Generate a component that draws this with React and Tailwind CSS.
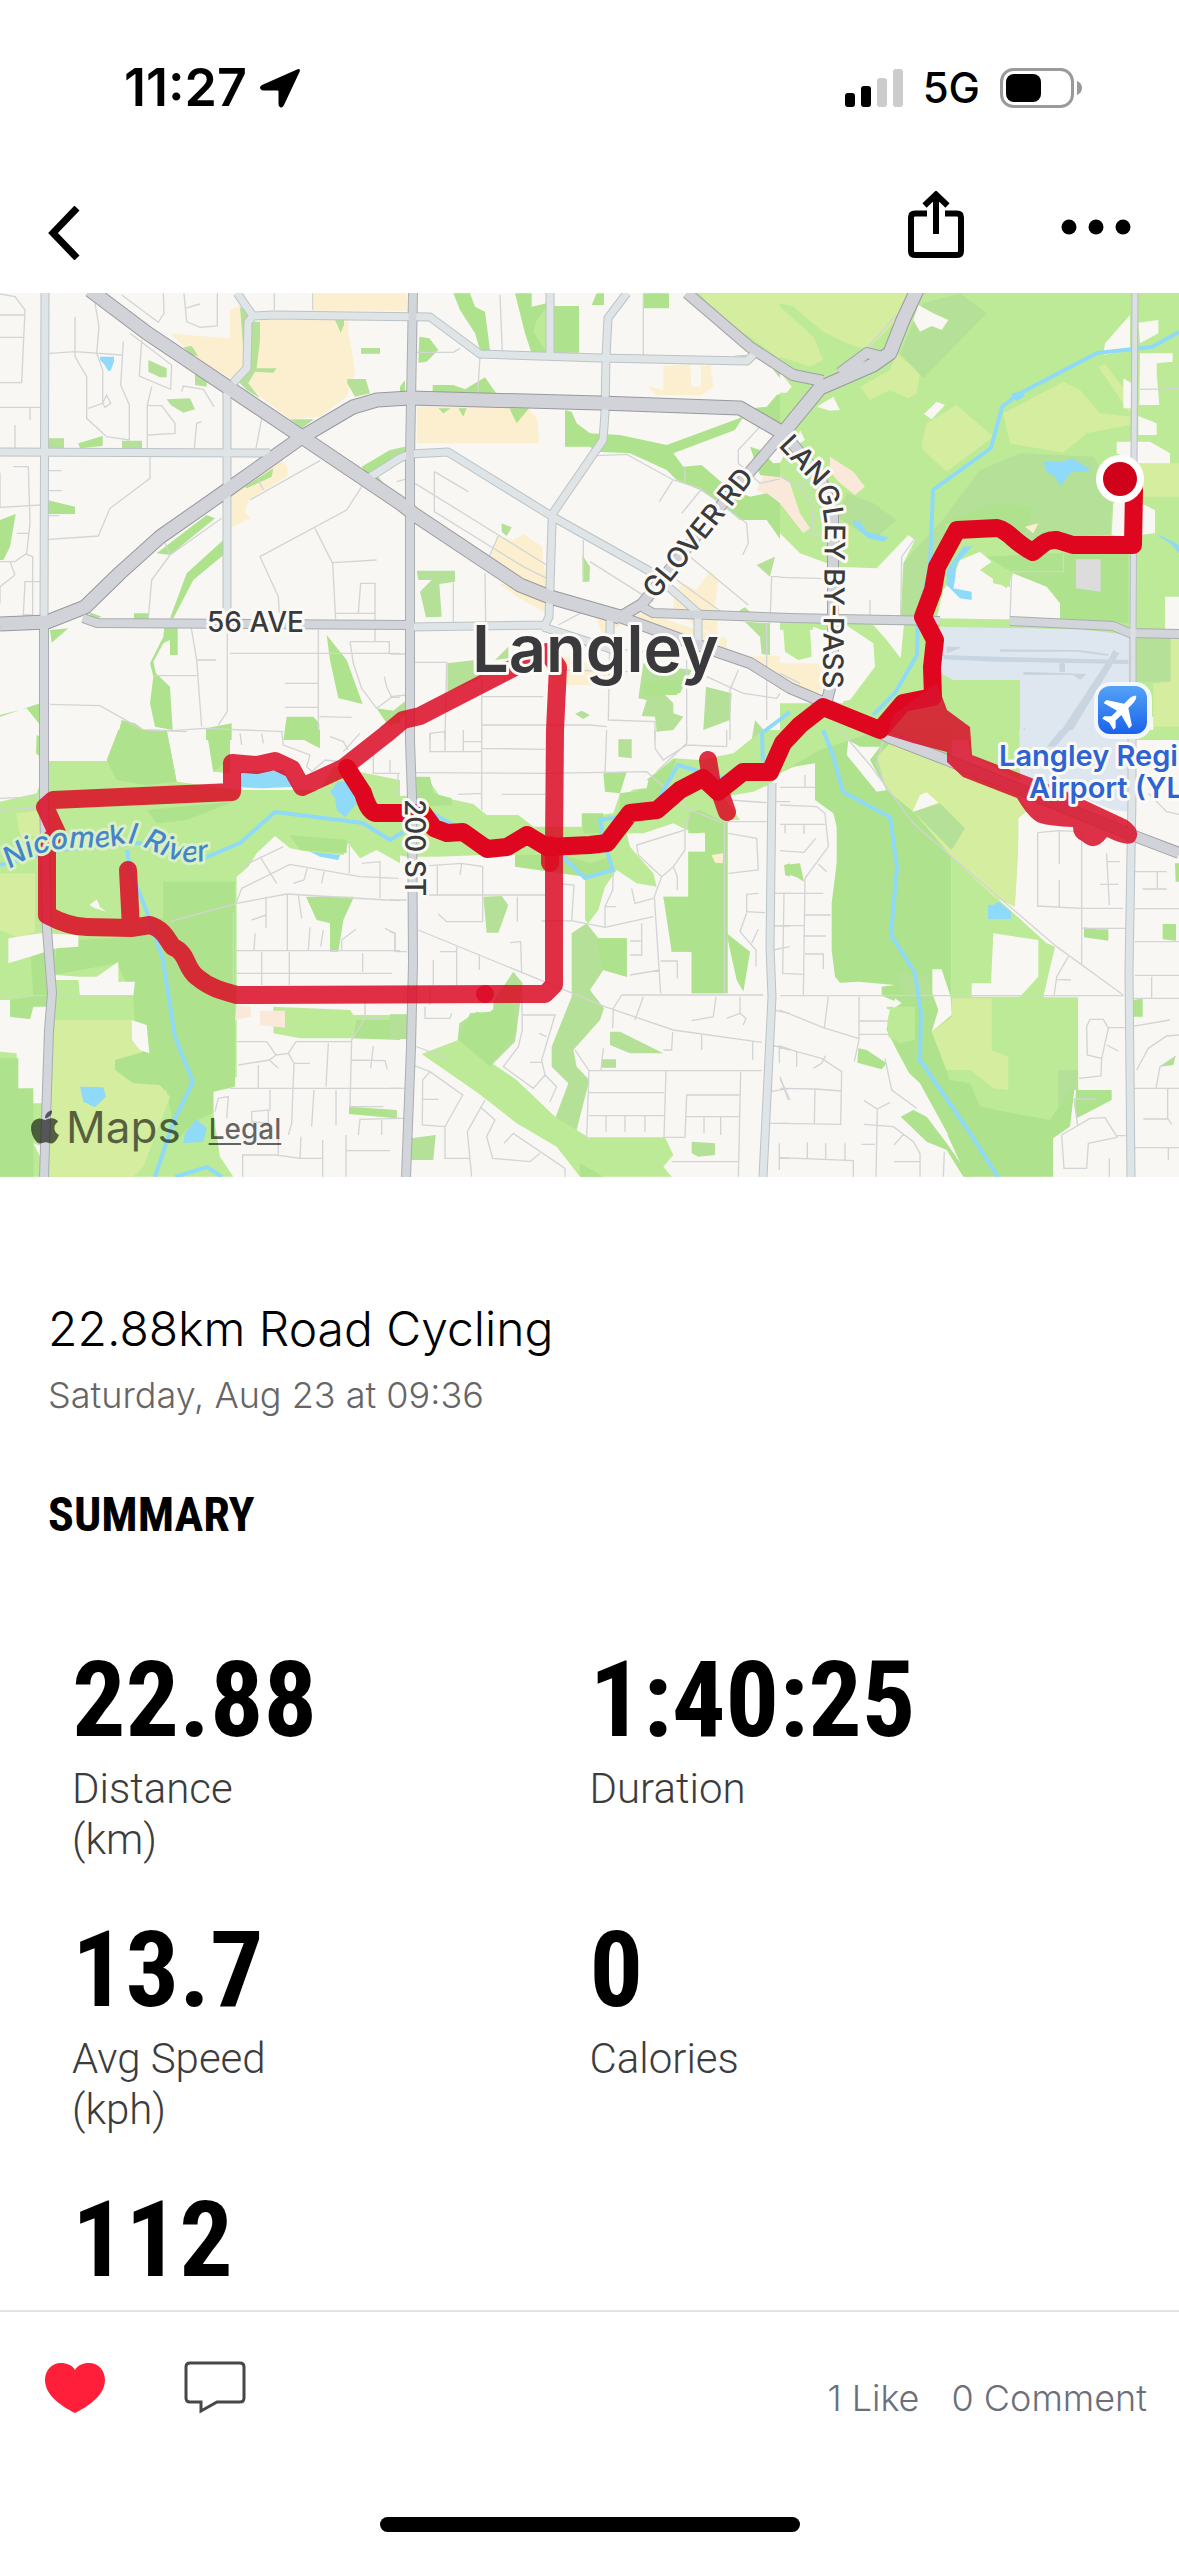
import React from "react";
import { FaApple } from "react-icons/fa";

const LAND = "#f8f7f3";
const GRASS = "#bcea96";
const WOOD = "#aee28c";
const PARK = "#b5e097";
const FIELD = "#d5ed9f";
const SHOPS = "#fcefcf";
const WATER = "#8fdaf8";
const BUILT = "#dcdcdc";
const CAMPUS = "#fae9da";

// every tile is drawn at 3 units per map unit
const tiles = [
  {
    x: 0,
    y: 290,
    areas: [
      [SHOPS, "M940 0H1200V62H940Z M780 90H1045V130L1055 180L1065 250L1040 320L960 380L870 388L780 320L745 280L762 240Z M510 130L560 135L690 145V60L720 45L735 90V240L690 265L600 210L540 160Z M695 600L780 550L840 505L862 530V558L795 600L745 630L735 668L752 685L695 712Z"],
      [WATER, "M300 200H342V215L332 242H324L315 226L300 210Z"],
      [PARK, "M720 50L735 60L762 95H780V150L770 235H830L820 248L765 245L745 280L780 325L740 300L700 260L735 240Z M550 172L575 168L595 198L575 195Z M445 210L500 235V262L480 262L445 245Z M585 250L620 265V290L585 285Z M500 328L570 325L585 358L550 368L512 345Z M1083 174H1140V191H1083Z M1005 90H1032V105L1022 130L1012 105Z M1042 267H1097L1110 310L1065 320L1042 280Z M870 388H942L905 415Z M142 445H192V475H142Z M366 452H426V478H366Z"],
      [WOOD, "M235 460L308 438V468L240 475Z M142 630L225 650V672H142Z M0 690L47 672L30 770L10 810H0Z M470 790L620 675L645 685L510 795Z M670 750V795L580 870L520 985H510L560 850Z M265 965L305 980L280 990Z M402 970H445V990H402Z M735 590L820 535L815 560L740 595Z M1085 530L1170 480H1200V505L1120 540L1150 580L1100 555Z M150 1020L205 1015L155 1058Z"],
      [WOOD, "M493 1010H533V1095H510V1050L490 1060L460 1115L468 1150L510 1190L518 1320L465 1310L450 1240L460 1160L450 1120L490 1040Z M980 1035L1040 1110L1088 1242L1015 1225L990 1110Z M0 1280L120 1240V1305L80 1255L0 1275Z M350 1350L365 1290L405 1300L440 1325L490 1350Z M618 1350V1315L695 1300V1350Z M850 1350L860 1280H940L958 1300V1350Z M1130 1255L1200 1265V1300L1160 1300Z"],
    ],
    streets:
      "M0 12L45 20L75 60L65 278H0 M0 142H72 M0 75H75 M0 352H122 M90 355V390 M45 405V475 M285 40L297 110L290 190L308 240V340L265 355 M308 340L320 315L332 340L315 352Z M148 190L225 185L365 195 M225 80V200L260 260V385L320 440L388 450V345L362 285L370 155 M365 15L475 97L492 70L490 10 M552 10L560 95L600 112L652 108V10 M555 55L600 42 M823 10V60 M938 10V60 M390 130L515 225L512 298L418 258L425 150 M455 290L442 345V475 M545 305L550 288L610 298L642 350 M442 347H485L525 400V430L445 435 M583 475L590 400L605 395 M785 385L768 475 M450 500V565L330 655L295 738L145 748 M145 542H185 M145 602H185 M145 677H178 M40 530H85L90 700L80 790L45 815L0 815 M50 730H85 M0 652L122 645 M80 793L98 800V975H70L75 875H122 M45 855L30 815 M45 855L0 890V940 M0 548V650 M510 795L455 870L445 985 M665 685L510 795L495 760 M960 512L750 630 M790 600L770 560 M1085 590L1040 660L780 800L835 920L838 970 M945 715L998 820L1007 990 M998 818L1130 810 M1075 970L1082 880H1125V1055 M1005 970H1125 M574 1015L590 1110L605 1310 M590 1110H648 M465 1157H590 M682 1020V1265L655 1305 M690 1090H1200 M955 1020V1350 M855 1180H955 M855 1252H955 M958 1280L1055 1282 M1050 1055L1060 1120L1085 1195L1130 1255 M1050 1055H1168V1090 M1153 1160L1160 1190L1175 1222L1130 1255 M1175 1222H1200 M150 1243L300 1247L430 1320L520 1322L610 1315L850 1325",
  },
  {
    x: 390,
    y: 290,
    areas: [
      [SHOPS, "M0 10H50V62H0Z M80 350H410L440 385L448 460H80Z M770 288L820 300V228L900 222L905 290H932V228L962 225L970 290L935 315H800Z M320 738L372 750L400 732L458 770V810L470 865V900L400 875L300 805Z M325 880L400 890L470 930V970L380 920Z M620 990L680 980L780 965L860 1000L1010 1045V1100L840 1040L700 1000L640 1040Z M850 910L880 880L920 900L960 840L985 870L975 950L985 1040L920 1010L850 960Z M1080 1100L1200 1095V1185L1140 1150Z M460 1120L530 1100L660 1140V1185H500Z"],
      [CAMPUS, "M1125 545L1200 560V650L1100 600Z"],
      [WOOD, "M190 10H240L255 50L285 65L300 180H270L255 130L210 60Z M375 10H425V50L470 40V190H425L405 130Z M490 48H567V188H490Z M605 45L620 10H642V45Z M762 10H837V55H762Z M88 140L118 145L145 180L110 215L85 218Z M128 285H190L225 298L285 262L320 312L128 306Z M30 290L45 270V310H30Z M145 355H182L160 370Z M205 355H230L220 380Z M358 355H417L380 400Z M525 360L545 365L560 400L600 430L690 435L830 465L1060 380L1035 420L850 490L880 530L935 525L1010 590L1080 620L1130 610L1200 660V790L1130 690L1050 690L990 640L930 600L860 570L830 540L720 490L620 485L600 470H525Z M1080 355L1130 350L1160 315L1200 305V400L1170 410Z"],
      [PARK, "M0 480L45 470V490L0 520Z M335 700L365 712L350 738L335 725Z M577 795L600 830L598 875H578Z M80 842H195V875L148 882L155 980L108 982L90 905L125 870L85 870Z M1100 825L1155 800L1140 860Z M1065 995L1140 1000V1095L1115 1092L1110 1040Z M1050 960L1065 952L1085 970L1050 970Z M760 1120L905 1140L870 1210L825 1215L850 1240V1270L880 1280L850 1320L800 1322L795 1280L755 1278L770 1230L745 1225Z M172 1120L255 1110L310 1130L260 1170L172 1205Z M315 1110L355 1070V1105Z M948 1190L1025 1210L1020 1290L940 1320Z M555 1272L575 1262L600 1275L580 1287Z M0 1270L50 1230V1270L0 1310Z M1095 1290L1130 1330L1110 1350H1085Z M1030 195H1080L1060 200Z M1150 240L1200 300V250Z"],
      [GRASS, "M440 90L470 50V188L430 125Z M900 10H1200V250L1080 160L1030 150L960 80Z"],
      [FIELD, "M930 10H1200V230L1080 140L990 90Z"],
      [WOOD, "M1080 470L1110 480L1150 520L1200 515V565L1110 555Z M760 1175L885 1170L860 1215H765Z"],
    ],
    streets:
      "M330 15L337 185 M760 10V195 M80 187H190L210 175 M270 200L263 315 M133 545L235 605 M133 545V665L400 830L470 865 M75 580L470 825 M295 805L325 738 M285 850L287 995 M190 878V1000 M20 575L75 560 M620 497L710 493L850 570L930 595L1070 700L1075 760L1058 795 M848 572L808 635 M935 597L875 670 M885 530V575 M1110 410L1045 480V520L1110 580L1200 560 M580 750V875 M600 815L790 935 M860 870L1000 970 M900 800L1075 945 M1200 860H1145L1140 1000 M1130 1000V1290 M505 1005L580 965 M660 1020L655 1290L795 1295V1350 M520 1060L760 1085 M510 1140L720 1145 M275 1160V1350 M275 1305H600L650 1310 M75 1117H170L165 1350 M275 1220H460 M890 1110V1350 M950 1160L1060 1210L1160 1225L1180 1195 M1045 1140L1020 1200V1350 M0 1220L50 1215 M0 1092H45 M120 1350V1330L165 1325",
  },
  {
    x: 780,
    y: 290,
    areas: [
      [GRASS, "M0 0H1197V1350H0Z"],
      [FIELD, "M0 10H385L350 90L260 180L200 160L130 125L40 50L0 40Z M0 50L100 140L130 210L90 230L0 200Z M240 290L330 240L350 190L420 250L410 310L385 325L330 300L270 330Z M425 460L440 400L530 345L640 440L500 545L430 480Z M670 370L850 275L900 300L960 370L1050 380V405L920 430L850 488L690 460Z M955 230L975 222L1050 320V370Z M1060 520H1197V620H1080Z M1140 1045H1197V1310H1120V1180H1140Z"],
      [PARK, "M430 40L540 10L620 70L430 265L360 190L400 100Z M600 540L720 490L940 500L1000 600L990 735L800 740L740 760L640 700L500 700L470 900L400 1000L360 970L370 820L440 740L480 700Z M200 610L280 640L350 690L280 750L170 680Z M1065 1045H1172V1175H1065Z"],
      [WOOD, "M620 800L800 790H1045V1000L840 985L820 910L700 850Z M480 700L640 640L760 650L730 740L640 700Z"],
      [LAND, "M415 45L460 70L505 90L485 120L455 108L420 125L400 90Z M0 245L35 290L20 308H0Z M110 350L160 320L180 360L150 362Z M470 335L495 345L455 388L432 372Z M970 195L975 160L1050 75V180Z M1075 98L1135 90V130L1080 160Z M1080 190H1178V215L1130 220V250L1138 345H1078Z M1030 265L1055 280V355H1030Z M1075 378L1130 400V435H1075Z M1010 455H1110L1170 490V520H1075L1010 490Z M1000 640L1040 620L1125 660V730L1080 735L1040 745L995 735Z M1155 920H1197V1025H1155Z M0 730L60 790L170 830L290 835L385 735L405 750L370 820L362 980L0 980Z M470 985L490 900L520 860L540 810L600 785L635 815L600 840L680 895L700 850L800 890L840 940V990Z M190 1000L280 1060L285 1130L210 1230L180 1235Z M280 1005H372L362 1105L320 1050Z M100 1010L180 1040V1130L100 1160L95 1030Z M60 420L75 450L50 465Z M1110 1280H1120V1320H1110Z M0 460L20 480L0 520Z M0 1020H190V1240H0Z"],
      [GRASS, "M10 1020L90 1020L95 1100L55 1110L15 1085Z M635 825L690 840V890L640 880Z"],
      [SHOPS, "M0 1120H125V1210L60 1200L0 1165Z M735 710L775 700L760 730Z"],
      [CAMPUS, "M0 555L30 580L60 670L90 715L70 730L0 640Z M150 500L220 545L255 590L225 615L180 580L150 545Z"],
      [BUILT, "M888 808H962V905L888 895Z"],
      ["#dee7f0", "M480 1010L900 1018L1047 1035V1350H720V1170H520L480 1150Z"],
      ["#c8d4df", "M490 1095L650 1100L1045 1110V1122L650 1115L490 1108Z M660 1078L900 1080L985 1092V1098L890 1085H660Z M1000 1080L1018 1090L860 1350H825L990 1100Z M500 1070H540V1075L500 1090Z M730 1145L920 1152L900 1170L880 1155H730Z M730 1310L745 1330V1350H735Z M838 1120H855V1145H838Z"],
      [WATER, "M790 515L850 515L875 505L935 540L905 545L875 545L840 588L825 560L800 545Z M218 690L240 695L260 725L325 742L310 755L265 745L225 710Z M1130 735L1150 740L1197 765V790L1170 760Z M550 770L578 768L530 820L525 870L520 895L575 905V930L540 925L500 885V840Z M695 310L725 305L735 318L712 332L695 325Z"],
    ],
    streets:
      "M0 560L60 590L130 530 M60 590L95 640L100 735H135 M0 862L140 866 M270 930V980 M405 745L365 800L362 980 M255 180L350 75 M60 310L100 350 M1080 298L1197 296 M690 990L695 845H850V790 M0 1150L60 1180 M170 1310L210 1350",
  },
  {
    x: 0,
    y: 730,
    areas: [
      [GRASS, "M0 215L110 190L145 93H325L355 0H500L530 155L720 180H960L1000 110L1200 150V400L1130 360L1080 385L1045 340L1030 375L950 370L870 355L825 318L770 370L745 410L710 440V640V1040L640 1085V1150L660 1280L700 1340H0Z M620 0H690V130L640 125Z"],
      [WOOD, "M320 90L355 0H500L530 155L440 165L350 150Z M490 455H705V1070L640 1085V1150L590 1170L530 1230L500 1080L380 1055L345 1020V985L410 970L400 800L350 700L160 735L170 655L240 630L400 620L490 560Z M0 1075H100V1340H0Z M440 240L700 215L560 270L470 280Z M870 315L1040 330V370L900 360Z M92 680L165 650V870H30V810L100 800Z M620 0H690V90L640 125Z M860 0H960V55L930 40Z M110 15L120 20V80L108 70Z"],
      [FIELD, "M0 430H105V605L60 625L0 600Z M48 250L130 240V320L60 315Z M165 870H395L392 930L430 965L345 990V1020L400 1060L480 1065L510 1100L430 1310L400 1340H140L150 1000Z M108 978H140V1012H108Z"],
      [LAND, "M25 625L120 610L235 615V650L170 655L90 680L25 700Z M165 735L240 740L290 740L355 695V755H405L400 797H240L235 750L165 750Z M0 810H30V860L90 868L100 830H160L150 1120H100V1075H50V970L0 965Z M395 870L440 885L448 970L420 960L395 930Z M268 525L290 508L300 530L318 545L285 535Z M100 1240L130 1250V1300Z"],
      [GRASS, "M820 830L1050 840L1060 855H1200V925H900L820 910Z"],
      [WOOD, "M918 500H1062L1030 570L1015 665H990V580L950 570Z M1047 1130L1190 1140V1165L1047 1152Z M1070 870H1200V930L1060 925Z M0 985L55 985V1080H0Z"],
      [CAMPUS, "M710 825L752 830V860L705 870Z M780 842H855V893L780 885Z"],
      [WATER, "M720 125L850 120L880 170L790 175L720 172Z M990 185L1015 155H1050L1070 220L1035 262L1010 240L1005 205Z M930 365L1020 375L1015 390L960 380Z M240 1070L310 1072L318 1100L285 1132L250 1115Z M555 1210L590 1168L620 1195L610 1235L550 1240Z"],
    ],
    streets:
      "M0 240L110 235 M0 205L120 200 M440 0L560 5 M720 10L725 45 M785 10L790 40 M845 5L850 45L930 75L920 110L935 125L975 90L1020 95 M990 20L1030 35L1045 60 M1080 10L1030 65 M1120 70V130H1200 M1170 90V130 M510 575L710 520L860 492L1160 510L1200 512 M710 515L725 475L870 403L1080 440L1195 445 M780 380L830 460 M850 350L725 410 M922 415L912 450L880 460 M972 425L965 460 M1048 345V430 M1085 400L1140 395V505 M862 492V662 M798 500V595 M755 570L798 555 M895 495L905 565 M762 660L765 610 M930 592L925 660 M970 600L962 650 M700 548V760 M705 662H1200 M785 665V765 M868 665V765 M705 730H1175 M1088 670V725 M1155 595L1185 610V660 M1068 598L1025 630V660 M0 797H400 M1095 815V865L1055 930L1050 1130H1150 M1095 862L1150 868 M710 935H800L828 975L865 970L888 935H1055 M715 1005L808 990L828 975 M808 990L835 1015 M865 970L882 1000H930 M882 1000L875 1180L865 1215 M775 1005V1075 M985 940L978 1070 M690 1075H1200 M810 1080V1140L755 1145V1175L805 1180V1140 M942 1080L935 1190 M1008 1080V1185 M1055 990L1155 992L1162 1018 M1120 948L1112 1015 M1200 1165L1080 1168L1075 1215 M1145 1170V1215 M1038 1215V1340 M1040 1262H1170 M968 1230V1340 M728 1340V1275L830 1275L900 1285H965 M903 1220L900 1285 M835 1220V1275 M645 1145L655 1105L685 1100L680 1165",
  },
  {
    x: 390,
    y: 730,
    areas: [
      [GRASS, "M0 200L75 195V140L120 155L150 200L250 222L290 255H385L430 290H575V262L670 250L690 190L720 185L770 150L850 85L930 90L1030 70L1080 30L1120 0H1200V80L1145 160L1090 185L1000 200L1030 240L1050 270V790H905V665H845L835 560L820 500H895V365H945V310L890 300L850 280L760 310H710L720 350L790 430L800 470L740 460L680 420L645 470L625 540L595 580L585 570V445L530 420L375 410V375L280 375L140 380L50 380L0 370Z"],
      [LAND, "M1014 270H1060V800H1014Z"],
      [WOOD, "M80 140L120 140L130 190L185 205V225L80 230Z M640 130L710 125L690 190L645 185Z M820 500H895V365H945V280L1010 270V790H905V665H845Z M375 375H520L600 400L660 380L668 425L585 440L375 410Z M575 250H640V310H580Z M1010 610L1080 665L1060 785L1040 750L1020 660Z M895 250L930 240L1000 275L930 310H895Z M770 150L860 85L840 140L810 200L690 250V190L740 185Z"],
      [PARK, "M280 500L335 498L355 525L325 608H290Z M370 725L398 760L380 900L375 935L300 1010L200 960L208 880L260 845L310 860V815Z M545 610L590 580L625 625H710V740L640 720L600 780L642 835L630 870L550 960L560 1010L598 1050L560 1200L490 1180L535 1060L485 1010V950L545 800Z M660 905H690L820 970H720L660 945Z M635 988H678V1013H635Z M905 1235L975 1240V1275L925 1280L905 1270Z M62 1225L137 1215L130 1290H62Z M0 853H52V927H0Z M685 28H725V85L685 80Z M1185 405L1200 400V440L1185 435Z M0 1140H20V1165H0Z M795 0H845L800 5Z"],
      [GRASS, "M95 972L205 930L380 1050L495 1160L595 1222H825L850 1275L820 1310L845 1340H570L500 1250L380 1180L265 1090Z"],
      [WOOD, "M208 930L240 850L300 845L360 800L380 900L300 1010Z M620 625H710V740L640 720Z M570 1300L640 1340H570Z"],
      [LAND, "M710 150L775 150L770 175L715 180Z"],
      [SHOPS, "M965 375L1000 370L998 400L975 398Z"],
    ],
    streets:
      "M120 10V65H275 M165 0V65 M220 0V65 M220 35H275 M275 0V240 M275 55L465 58 M75 128L465 130L770 125L900 240L990 275H1130 M650 0L645 130 M205 193L275 190 M335 193H465 M795 0V55L820 90L890 45L1010 50 M890 0V40L800 125 M1010 0V50 M75 410L215 400L278 410V575H170L145 552 M142 408V495 M215 400L210 435 M110 495H465 M382 500V575 M85 600L645 830L850 900L1115 937 M200 645V765 M150 665H200 M130 690V765 M268 672V720 M360 638L392 635L395 730 M515 462L552 465L545 572L645 592L790 560 M455 573L545 572 M645 592V530L668 480L670 420 M645 530H678 M755 580V675H720 M720 633H752 M725 475L735 520L790 505 M900 250L885 300L740 345L745 375L815 440L793 500L812 790 M885 300L885 360L850 410L862 440V480 M850 410L815 440 M812 693H862V745 M720 735L810 720 M1003 280V790 M1015 310L1100 325L1105 420L1015 430 M1105 490L1070 493V545L1125 548 M1070 548L1050 605L1098 660V710 M1105 598L1085 640 M1020 210L1130 218 M695 795H1120 M695 795L670 835L668 895 M760 800L735 870 M978 800L970 860L905 872 M1050 800V850L1010 865 M1050 850L1068 865L1060 885 M848 905L845 960H820 M935 910V960 M1088 935V990 M105 830V865H180L185 850 M120 770V825 M395 770L397 900L385 950L340 1010L430 1075L465 1035L500 1070L480 1115 M397 855H495L455 990L465 1035 M420 997H455 M448 910L470 920 M75 948L170 985 M75 1008L120 1025L218 1095L165 1190L97 1185L98 1050L120 1025 M98 1108H145 M165 1190V1285H240 M285 1110L232 1205L245 1340 M270 1130L315 1170L290 1220L308 1285L420 1295L450 1270 M342 1240L370 1210L525 1315V1340 M555 960L597 1022H1115 M597 1022L590 1225 M597 1088H822 M597 1157H822 M828 1022L822 1222H885L890 1095H1048 M888 1160H1050 M648 1157V1205 M705 1157V1205 M765 1157V1205 M942 1160V1210 M992 1160V1215 M1052 1025L1045 1340 M845 1295H1045 M640 955L633 1020 M0 510H50 M0 605L15 610V665H50 M0 1075H45 M0 1165H45 M1150 490H1200 M1150 588H1200 M1150 660L1200 650 M1150 840L1200 850 M1145 945L1200 960 M1140 1085L1200 1075 M1170 1045L1200 1110 M1168 945V1000 M1140 1180H1200 M1168 1240V1320 M1168 1285H1200 M25 130L20 200 M1150 215H1200",
  },
  {
    x: 780,
    y: 730,
    areas: [
      [WOOD, "M0 130L40 110L105 100V210L160 250L170 290V400L155 520V660L165 740L180 758L235 755L345 765L305 770V797L360 820L330 840L320 900L350 960L420 1090L500 1210L560 1340H820V1225L870 1190L890 1020V800H515V0H0Z"],
      [GRASS, "M515 380L800 640L825 650L790 800H895V1080H870L810 1170L700 1150L600 1130L570 1060L510 1050L490 1000L455 905L515 860V600Z M0 0H300L120 60L0 130Z M560 0H720V150L570 75Z M320 830H405V930L360 940L325 920Z"],
      [FIELD, "M290 80L330 40L500 95L720 205L745 240L715 265V400L705 530L640 500L515 380L400 245L320 180Z M515 805H635V960L685 980V1080L640 1075L570 1020L500 1020L455 905L515 860Z"],
      [PARK, "M400 245L480 220L555 295L515 360Z M345 730L440 740L460 800H380Z M835 1020H895V1080H870L835 1150Z"],
      [LAND, "M205 30L240 50H300L270 90L320 180L290 185L200 75Z M398 245L420 195L440 187L475 218L430 235Z M640 610L775 630V740L720 800H575V760H633Z M457 718H485L512 800L515 855L455 905L475 840L457 790Z M345 805L365 820L340 835Z M330 840L315 900L345 990L420 1060L505 1215L470 1205L340 1080L300 990L230 960L235 800Z"],
      [LAND, "M720 265L760 265L1197 330V1340H820V1225L870 1190L895 1160L1000 1100V1080H895V802H790L828 650L705 540Z"],
      [WOOD, "M888 1080H995V1110L890 1165L885 1130Z M1060 810L1088 805V860H1058Z M1148 582H1188V632L1148 628Z M912 592L950 598H985V632L912 622Z M1185 400H1197V455H1187Z M1140 1010L1187 978L1180 1005Z M235 955L260 960L320 1000L305 1018L232 998Z M362 1160L400 1140L440 1160L500 1240L570 1340H550L500 1260L440 1235Z M12 405L60 400L72 455L50 442L15 430Z"],
      [WATER, "M624 525H640L655 515L693 545V567H624Z"],
      ["#dee7f0", "M718 0H1047V245L1000 240L720 130Z"],
      ["#c8d4df", "M840 0H870L825 50H800Z"],
      [LAND, "M1065 180H1197V335L1065 300Z"],
    ],
    streets:
      "M180 0L270 105L400 280L515 380L830 650L1030 795 M310 30L290 100L320 180 M0 797H1030 M0 172H105 M75 135V172 M0 225L110 230L135 250L145 350L75 445L70 795 M0 283H135 M15 283V310 M72 283V312 M0 362L72 367L107 325 M115 402L140 425 M0 490H130 M12 490L8 730L68 733 M75 555H152 M70 618H137 M0 587H70 M75 672H130V717 M145 800L133 893 M0 840L130 893L235 925 M237 800V930L223 995 M235 873H325 M237 913H325 M0 948L50 965L125 985L185 1025L182 1183L0 1180 M50 965V1010 M137 977L125 1000L100 1015 M0 1075L105 1077L185 1083 M105 1077L103 1180 M0 1040L25 1110 M315 985L335 1080L410 1135 M252 1112L292 1137L330 1117 M292 1137L288 1340 M252 1183L340 1190L400 1235L420 1270V1340 M245 1243H285 M370 1213L342 1245 M342 1295H420 M493 1265L490 1340 M0 1283L220 1292V1340 M82 1237V1285 M137 1240V1287 M195 1240V1290 M773 308L838 302L905 305V705 M773 308V528L905 535H1030 M838 305V402 M838 450V530 M980 370L988 525 M980 395H1020 M960 463H1015 M905 595H1037 M865 680L830 740L822 800 M830 748L873 750 M1065 425H1160 M1132 425V477 M1088 477H1160 M1105 190L1160 245L1197 253 M1065 536H1197 M1065 635H1197 M1065 736H1197 M1115 740V805 M1060 805H1197 M930 868H970L985 895L965 985L922 975L920 890Z M980 945L1015 963 M985 893H1035L1170 870 M965 985L963 1038L897 1045 M1197 915L1160 918L1105 955L1070 1020 M1187 978L1140 1010L1128 1075 M1060 1075H1197 M1163 1077V1165L1175 1183 M1090 1167H1165 M880 1107H948 M882 1110L893 1187 M845 1215L930 1165L975 1163L1012 1222L925 1240L920 1315H852L845 1215 M1012 1217H1037 M1065 1253H1197 M1165 1255V1290 M988 1285V1340",
  },
];

const rivers = [
  "M1179 332L1152 347L1097 353L1017 395L1002 407L991 448L933 490L930 567L918 620L917 655L895 693L873 715",
  "M823 730L833 755L843 792L890 817L897 867L891 935L915 973L921 1013L920 1060L970 1133L998 1177",
  "M790 712L762 733L763 762 M728 780L678 765L660 797 M625 816L600 820L605 845L613 870L585 878L563 857",
  "M430 812L457 827 M403 832L390 840L363 823L275 812L240 843L200 860L140 843L60 850L0 865",
  "M127 850L130 870L147 912L163 960L175 1037L193 1082L173 1123L155 1177 M175 1177L207 1167L222 1177",
];

const roads = [
  {
    casing: "#bcc3c6",
    fill: "#dfe5e6",
    width: 7,
    d: "M45 293L44 620 M227 390V613 M233 383L247 368L248 322L253 316L237 293 M253 316L273 315L430 317L480 354L600 358L747 361L755 353 M0 452L270 453 M550 293V353 M627 293L608 318L606 357L605 413L603 440L553 513L552 523L549 617L545 625L410 627 M370 477L400 458L410 454L448 452L553 517L653 573L698 613V643 M772 783L770 947L772 997L763 1177 M610 615V640 M1132 690V797L1129 970L1131 1177 M543 627L620 652",
  },
  {
    casing: "#a9adb1",
    fill: "#d2d6da",
    width: 8,
    d: "M44 625V797L47 930L52 993L49 1030L44 1177 M83 618L97 623L410 625 M642 607L653 613L790 618L940 621 M1010 621L1113 626L1130 633L1179 634 M413 293L410 457V740L412 797L413 963L411 1047L406 1177",
  },
  { casing: "#babec2", fill: "#dcdfe3", width: 5, d: "M1135 293L1133 633V690" },
  {
    casing: "#9fa0a6",
    fill: "#d2d3d9",
    width: 10,
    d: "M687 293L750 347L793 375L823 381 M840 373L867 353L883 357 M787 437L820 477L833 510V677L827 700 M620 617L642 604L723 503L783 433 M620 617L683 640L750 663L790 688L823 702L890 738L947 760L1137 837L1179 853",
  },
  {
    casing: "#98999f",
    fill: "#d2d3d9",
    width: 13,
    d: "M90 290L147 333L302 437L400 503L415 515L520 585L550 597L620 617 M0 624L47 622L85 607L120 573L160 537L230 488L302 437L353 407L377 400L410 398L600 403L740 408L783 433L820 388L873 365L890 353L903 320L917 290",
  },
];

const loop =
  "M547 652L523 663L420 716L403 720L385 735L343 768L302 787L292 769L275 761L257 765L232 763L232 792L53 800L45 807L57 833L47 843L47 915C60 922 75 927 87 927L131 928L128 870L131 928L150 925C165 930 167 940 173 947C188 953 185 968 197 977C210 988 222 991 237 995L545 994L554 985L554 843L555 730L558 667Z";

const ride =
  "M347 768L352 776L363 793C367 806 370 811 375 813H400L423 813L434 828L447 833L463 832L487 849L507 847L527 835L547 847L590 845L607 843L630 813L657 810L680 790L703 778L718 792L743 772L770 772L783 743L800 725L823 707L880 730L903 703L933 697L932 667L935 640L923 617L933 590L937 567L957 530L997 528C1010 531 1014 543 1033 552C1042 545 1046 539 1057 540L1073 545H1133L1134 490";

const stats = [
  { value: "22.88", label: "Distance", unit: "(km)" },
  { value: "1:40:25", label: "Duration" },
  { value: "13.7", label: "Avg Speed", unit: "(kph)" },
  { value: "0", label: "Calories" },
  { value: "112" },
];

function StatusBar() {
  return (
    <div className="flex justify-between items-center h-44 pl-31 pr-24 font-['Inter',sans-serif] text-black">
      <div className="flex items-center gap-3">
        <span className="text-[52px] leading-none font-semibold">11:27</span>
        <svg className="w-[42px] h-[40px]" viewBox="0 0 42 40">
          <path d="M38 1.500L3 17Q0 19 1.500 21Q2.500 22.500 5 22.500H18.500Q19.500 22.500 19.500 23.500V36Q19.500 39 21.500 39.500Q23.500 40 25 37L40.500 4Q42 0 38 1.500Z" />
        </svg>
      </div>
      <div className="flex items-center gap-5">
        <svg className="w-[58px] h-[38px]" viewBox="0 0 58 38">
          <rect x="0" y="24" width="10" height="14" rx="3" />
          <rect x="16" y="17" width="10" height="21" rx="3" />
          <rect x="32" y="9" width="10" height="29" rx="3" fill="#cccccc" />
          <rect x="48" y="0" width="10" height="38" rx="3" fill="#cccccc" />
        </svg>
        <span className="text-[42px] leading-none font-medium">5G</span>
        <svg className="w-[83px] h-[40px]" viewBox="0 0 83 40">
          <rect x="1.500" y="1.500" width="71" height="37" rx="12" fill="none" stroke="#9a9a9a" strokeWidth="3" />
          <rect x="6" y="6" width="35" height="28" rx="8" />
          <path d="M77 13Q82 15 82 20T77 27Z" fill="#9a9a9a" />
        </svg>
      </div>
    </div>
  );
}

function NavBar() {
  return (
    <div className="flex justify-between items-center h-[117px] pl-12 pr-12 pb-6">
      <button aria-label="Back" className="pt-5">
        <svg className="w-[32px] h-[54px]" viewBox="0 0 32 54" fill="none" stroke="black" strokeWidth="7">
          <path d="M29 2L5 27L29 52" />
        </svg>
      </button>
      <div className="flex items-center gap-24">
        <button aria-label="Share" className="pt-1">
          <svg className="w-[58px] h-[68px]" viewBox="0 0 58 68" fill="none" stroke="black" strokeWidth="6">
            <path d="M20 22.500H8Q4 22.500 4 26.500V60Q4 64 8 64H50Q54 64 54 60V26.500Q54 22.500 50 22.500H38" />
            <path d="M29 43V4M17.500 14.500L29 3.500L40.500 14.500" />
          </svg>
        </button>
        <button aria-label="More" className="pt-2">
          <svg className="w-[70px] h-[16px]" viewBox="0 0 70 16">
            <circle cx="8" cy="8" r="7.500" />
            <circle cx="35" cy="8" r="7.500" />
            <circle cx="62" cy="8" r="7.500" />
          </svg>
        </button>
      </div>
    </div>
  );
}

function RouteMap() {
  return (
    <div className="relative">
      <svg
        className="block w-full h-auto font-['Inter',sans-serif]"
        viewBox="0 293 1179 884"
        role="img"
        aria-label="Route map"
      >
        <defs>
          <path id="bypassLine" d="M778 446L810 480Q824 500 825 530L822 740" />
          <path id="riverLine" d="M10 869C60 835 90 855 125 843C160 845 175 880 236 850" />
          <linearGradient id="planeFill" x1="0" y1="0" x2="0" y2="1">
            <stop offset="0" stopColor="#54a3f7" />
            <stop offset="1" stopColor="#1a62ea" />
          </linearGradient>
        </defs>
        <rect x="0" y="293" width="1179" height="884" fill={LAND} />
        {tiles.map((tile) => (
          <g key={`${tile.x}-${tile.y}`} transform={`translate(${tile.x} ${tile.y}) scale(0.33333)`}>
            {tile.areas.map(([color, d], i) => (
              <path key={i} d={d} fill={color} />
            ))}
            <path d={tile.streets} fill="none" stroke="#d3d4d6" strokeWidth="4" />
          </g>
        ))}
        {rivers.map((d) => (
          <path key={d} d={d} fill="none" stroke={WATER} strokeWidth="4" strokeLinejoin="round" />
        ))}
        {roads.map((road) => (
          <path key={road.d} d={road.d} fill="none" stroke={road.casing} strokeWidth={road.width + 2} strokeLinejoin="round" />
        ))}
        {roads.map((road) => (
          <path key={road.d} d={road.d} fill="none" stroke={road.fill} strokeWidth={road.width} strokeLinejoin="round" />
        ))}

        {/* route */}
        <g fill="none" stroke="#dc0a24" strokeWidth="18" strokeLinejoin="round" strokeLinecap="round">
          <path d={loop} opacity="0.85" />
          <path d="M708 760L712 785M727 812L720 792M550 863V845M485 994H485" opacity="0.85" />
          <path d={ride} stroke="#df071f" />
        </g>
        <path
          d="M887 735L893 715L937 683L947 710L970 727L972 755L1063 790L1127 820Q1142 830 1135 841Q1129 848 1107 837Q1095 853 1082 841Q1073 837 1073 827Q1050 826 1040 823Q1030 820 1017 798L963 777L947 762V752L913 743Z"
          fill="#d8142c"
          opacity="0.87"
        />

        {/* labels */}
        <g fill="#3a3a3c" stroke="#fbfaf7" strokeWidth="6" strokeLinejoin="round" paintOrder="stroke" fontWeight="500">
          <g fontSize="28">
            <text x="207" y="632">56 AVE</text>
            <text transform="translate(656 600) rotate(-51)">GLOVER RD</text>
            <text>
              <textPath href="#bypassLine">LANGLEY BY-PASS</textPath>
            </text>
            <text transform="translate(405 799) rotate(90)">200 ST</text>
          </g>
          <text x="472" y="672" fontSize="65" fontWeight="600">Langley</text>
          <g fill="#2d63d2" fontSize="29" fontWeight="600">
            <text x="999" y="766">Langley Regi</text>
            <text x="1029" y="798">Airport (YL</text>
          </g>
          <text fill="#4384cc" stroke="#d9f0c4" fontSize="29" fontStyle="italic">
            <textPath href="#riverLine">Nicomekl River</textPath>
          </text>
        </g>

        {/* airport */}
        <rect x="1094" y="682" width="58" height="57" rx="17" fill="#f4f7fa" />
        <rect x="1098" y="686" width="49" height="48" rx="12" fill="url(#planeFill)" />
        <g transform="translate(1122 710) rotate(45)" fill="white">
          <path d="M0 -20Q3 -18 3 -12V-6L18 4V8L3 4V12L8 17V20L0 18L-8 20V17L-3 12V4L-18 8V4L-3 -6V-12Q-3 -18 0 -20Z" />
        </g>

        {/* start point */}
        <circle cx="1120" cy="479" r="24" fill="white" />
        <circle cx="1120" cy="479" r="17" fill="#d0021b" />
      </svg>
      <div className="absolute left-7 bottom-7 flex items-center gap-7 font-['Inter',sans-serif] text-black/60">
        <span className="flex items-center gap-1 text-[44px] leading-none">
          <FaApple className="w-[34px] h-[38px]" />
          Maps
        </span>
        <a href="#legal" className="text-[28px] leading-none font-medium underline underline-offset-4 pt-1">
          Legal
        </a>
      </div>
    </div>
  );
}

function Stat({ stat }) {
  return (
    <div>
      <div className="font-['Roboto_Condensed','Liberation_Sans_Narrow',sans-serif] text-[106px] leading-[126px] font-bold text-black">
        {stat.value}
      </div>
      {stat.label && (
        <div className="font-['Roboto',sans-serif] text-[42px] leading-[51px] h-[104px] font-light text-[#3c3c3c]">
          <div>{stat.label}</div>
          {stat.unit && <div>{stat.unit}</div>}
        </div>
      )}
    </div>
  );
}

export default function App() {
  return (
    <div className="flex flex-col min-h-screen bg-white">
      <StatusBar />
      <NavBar />
      <RouteMap />
      <main className="px-12 pt-[120px] font-['Inter',sans-serif]">
        <h1 className="text-[48px] leading-[64px] font-light text-black">22.88km Road Cycling</h1>
        <p className="mt-2 text-[36px] leading-[52px] font-light text-[#666666]">Saturday, Aug 23 at 09:36</p>
        <h2 className="mt-16 font-['Roboto_Condensed','Liberation_Sans_Narrow',sans-serif] text-[48px] leading-[60px] font-bold text-black">
          SUMMARY
        </h2>
        <div className="grid grid-cols-2 gap-x-2 gap-y-10 mt-23 pl-6 pr-8">
          {stats.map((stat) => (
            <Stat key={stat.value} stat={stat} />
          ))}
        </div>
      </main>
      <footer className="mt-auto h-[246px] flex flex-col justify-between border-t-2 border-[#e2e2e2] px-8 pb-6 font-['Inter',sans-serif]">
        <div className="flex justify-between items-center pt-11 pl-3">
          <div className="flex items-center gap-[78px]">
            <button aria-label="Like">
              <svg className="w-[62px] h-[52px]" viewBox="0 0 62 52">
                <path d="M31 51C15 43 1 32 1 18C1 8 8 1 17 1C23 1 28 3 31 8C34 3 39 1 45 1C54 1 61 8 61 18C61 32 47 43 31 51Z" fill="#ff1f3a" />
              </svg>
            </button>
            <button aria-label="Comment">
              <svg className="w-[62px] h-[54px]" viewBox="0 0 62 54" fill="none" stroke="#474747" strokeWidth="3">
                <path d="M6 2H56Q60 2 60 6V37Q60 41 56 41H33L17 50V41H6Q2 41 2 37V6Q2 2 6 2Z" />
              </svg>
            </button>
          </div>
          <div className="flex gap-8 pt-5 text-[36px] leading-[44px] font-light text-[#6b6f7b]">
            <span>1 Like</span>
            <span>0 Comment</span>
          </div>
        </div>
        <div className="w-[420px] h-[15px] rounded-full bg-black self-center" />
      </footer>
    </div>
  );
}
